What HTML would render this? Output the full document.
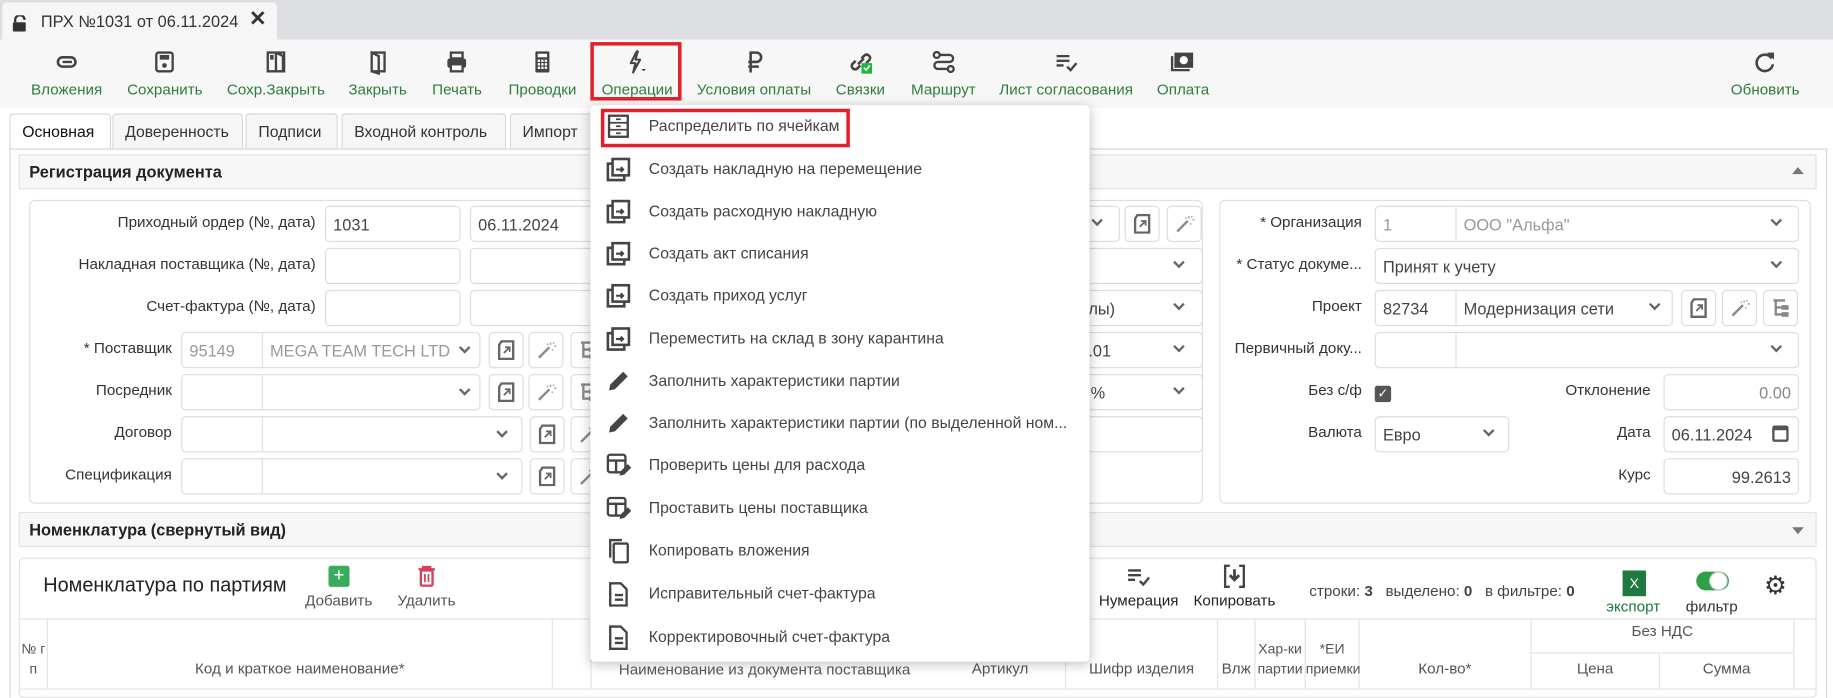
<!DOCTYPE html>
<html><head><meta charset="utf-8">
<style>
*{box-sizing:border-box;margin:0;padding:0}
body{width:1833px;height:689px;overflow:hidden;background:#fff;font-family:"Liberation Sans",sans-serif;font-size:13px;color:#333;position:relative}
#s{position:absolute;left:0;top:0;width:1568px;height:590px;transform:scale(1.16901);transform-origin:0 0}
.a{position:absolute}
.tb{position:absolute;top:42px;text-align:center;transform:translateX(-50%);white-space:nowrap}
.tb svg{display:block;margin:0 auto 5px;width:22px;height:22px}
.tb span{color:#2e7d3e;font-size:13px}
.tab{position:absolute;top:97px;height:30px;border:1px solid #d6d6d6;border-bottom:none;border-radius:3px 3px 0 0;background:#f6f6f6;padding:7px 10px 0;font-size:13.5px;color:#333}
.inp{position:absolute;height:31px;border:1px solid #dcdcdc;border-radius:4px;background:#fff;font-size:14px;padding:7px 6px;color:#444;white-space:nowrap;overflow:hidden}
.lbl{position:absolute;font-size:13px;text-align:right;white-space:nowrap;color:#333}
.chev{position:absolute;width:7px;height:7px;border-right:2px solid #666;border-bottom:2px solid #666;transform:rotate(45deg)}
.btn{position:absolute;width:30px;height:31px;border:1px solid #dcdcdc;border-radius:4px;background:#fff}
.btn svg{position:absolute;left:6px;top:6px;width:17px;height:17px}
.sec{position:absolute;left:16px;width:1538px;height:30px;background:#f7f7f7;border:1px solid #e2e2e2;font-weight:bold;font-size:14px;padding:6px 8px;color:#222}
.mi{position:absolute;left:518px;font-size:13.5px;color:#444;white-space:nowrap}
.mi .t{position:absolute;left:37px;top:0}
.mi svg{position:absolute;left:0;top:-3px;width:22px;height:22px}
.th{position:absolute;font-size:13px;color:#555;text-align:center;border-right:1px solid #e3e3e3}
</style></head><body>
<svg width="0" height="0" style="position:absolute"><defs>
<g id="lk"><path d="M4 1h10v15H2V4z" fill="none" stroke="#666" stroke-width="2"/><path d="M6 11l5-5M7 6h4v4" stroke="#666" stroke-width="1.5" fill="none"/></g>
<g id="wd"><path d="M2 15l9-9" stroke="#888" stroke-width="2"/><path d="M12 2v2M15 5h2M14 3l1-1M13 8l1 1M10 4l-1-1" stroke="#aaa" stroke-width="1.3"/></g>
<g id="tr"><path d="M2 2h10M4 2v13M4 8h8M4 14h8" stroke="#888" stroke-width="2" fill="none"/><rect x="9" y="6" width="6" height="4" fill="#888"/><rect x="9" y="12" width="6" height="4" fill="#888"/></g>
</defs></svg>
<div id="s">
<!-- tab bar -->
<div class="a" style="left:0;top:0;width:1568px;height:34px;background:#dcdee2"></div>
<div class="a" style="left:2px;top:2px;width:235px;height:40px;background:#f6f6f7;border-radius:4px 4px 0 0"></div>
<svg class="a" style="left:10px;top:13px" width="14" height="14" viewBox="0 0 14 14"><path d="M3 6V4a4 4 0 0 1 8 0" fill="none" stroke="#333" stroke-width="2"/><rect x="1" y="6" width="11" height="8" rx="1" fill="#333"/></svg>
<div class="a" style="left:35px;top:10px;font-size:14px;color:#333">ПРХ №1031 от 06.11.2024</div>
<div class="a" style="left:213px;top:6px;font-size:18px;font-weight:bold;color:#333">✕</div>
<!-- toolbar -->
<div class="a" style="left:0;top:34px;width:1568px;height:58px;background:#f7f7f8"></div>
<div class="tb" style="left:57px"><svg viewBox="0 0 22 22"><rect x="4" y="7" width="15" height="8" rx="4" fill="none" stroke="#444" stroke-width="2.2"/><path d="M8 11h8" stroke="#444" stroke-width="2"/></svg><span>Вложения</span></div>
<div class="tb" style="left:141px"><svg viewBox="0 0 22 22"><rect x="4" y="3" width="14" height="16" rx="2" fill="none" stroke="#444" stroke-width="2"/><rect x="7" y="5" width="8" height="4" fill="#444"/><circle cx="11" cy="14" r="2" fill="#444"/></svg><span>Сохранить</span></div>
<div class="tb" style="left:236px"><svg viewBox="0 0 22 22"><path d="M4 3h14v16H4z M11 3v16 M11 3l6 3v13" fill="none" stroke="#444" stroke-width="2"/><rect x="6" y="5" width="3" height="4" fill="#444"/></svg><span>Сохр.Закрыть</span></div>
<div class="tb" style="left:323px"><svg viewBox="0 0 22 22"><path d="M6 3h11v16H6z M6 3l6 3v15l-6-2z" fill="none" stroke="#444" stroke-width="2"/></svg><span>Закрыть</span></div>
<div class="tb" style="left:391px"><svg viewBox="0 0 22 22"><rect x="6" y="3" width="10" height="5" fill="none" stroke="#444" stroke-width="2"/><rect x="3" y="8" width="16" height="8" rx="2" fill="#444"/><rect x="6" y="13" width="10" height="6" fill="#fff" stroke="#444" stroke-width="2"/></svg><span>Печать</span></div>
<div class="tb" style="left:464px"><svg viewBox="0 0 22 22"><rect x="5" y="2" width="12" height="18" rx="1" fill="#444"/><rect x="7" y="4" width="8" height="3" fill="#fff"/><g fill="#fff"><rect x="7" y="9" width="2" height="2"/><rect x="10" y="9" width="2" height="2"/><rect x="13" y="9" width="2" height="2"/><rect x="7" y="12" width="2" height="2"/><rect x="10" y="12" width="2" height="2"/><rect x="13" y="12" width="2" height="2"/><rect x="7" y="15" width="2" height="2"/><rect x="10" y="15" width="2" height="2"/><rect x="13" y="15" width="2" height="2"/></g></svg><span>Проводки</span></div>
<div class="tb" style="left:545px"><svg viewBox="0 0 22 22"><path d="M11 2L6 12h4l-2 8 6-11h-4l2-7z" fill="none" stroke="#444" stroke-width="1.8" stroke-linejoin="round"/><path d="M15 17h4l-2 2z" fill="#444"/></svg><span>Операции</span></div>
<div class="a" style="left:505px;top:36px;width:78px;height:50px;border:3px solid #e3202a"></div>
<div class="tb" style="left:645px"><svg viewBox="0 0 22 22"><path d="M8 20V3h5a4 4 0 0 1 0 8H6 M6 15h9" fill="none" stroke="#444" stroke-width="2.2"/></svg><span>Условия оплаты</span></div>
<div class="tb" style="left:736px"><svg viewBox="0 0 22 22"><path d="M9 13l5-5 M7 10l-3 3a3 3 0 0 0 4 4l3-3 M12 8l3-3a3 3 0 0 1 4 4l-3 3" fill="none" stroke="#444" stroke-width="2.2"/><rect x="12" y="12" width="9" height="9" fill="#1fb53a"/><path d="M14 16l2 2 3-4" stroke="#fff" stroke-width="1.4" fill="none"/></svg><span>Связки</span></div>
<div class="tb" style="left:807px"><svg viewBox="0 0 22 22"><circle cx="5" cy="5" r="2.5" fill="none" stroke="#444" stroke-width="2"/><circle cx="17" cy="17" r="2.5" fill="none" stroke="#444" stroke-width="2"/><path d="M8 5h8a3 3 0 0 1 0 6H6a3 3 0 0 0 0 6h8" fill="none" stroke="#444" stroke-width="2"/></svg><span>Маршрут</span></div>
<div class="tb" style="left:912px"><svg viewBox="0 0 22 22"><path d="M3 6h11M3 10h11M3 14h6M12 15l3 3 5-6" fill="none" stroke="#444" stroke-width="2"/></svg><span>Лист согласования</span></div>
<div class="tb" style="left:1012px"><svg viewBox="0 0 22 22"><rect x="4" y="3" width="16" height="13" fill="#444"/><circle cx="12" cy="9.5" r="3.5" fill="#fff"/><path d="M2 6v12h15" fill="none" stroke="#444" stroke-width="2"/></svg><span>Оплата</span></div>
<div class="tb" style="left:1510px"><svg viewBox="0 0 22 22"><path d="M17 8a7 7 0 1 0 1 5" fill="none" stroke="#444" stroke-width="2.2"/><path d="M13 3h6v6z" fill="#444"/></svg><span>Обновить</span></div>
<!-- tabs -->
<div class="tab" style="left:8px;width:87px;background:#fff;height:31px;color:#111">Основная</div>
<div class="tab" style="left:96px;width:112px">Доверенность</div>
<div class="tab" style="left:210px;width:79px">Подписи</div>
<div class="tab" style="left:292px;width:141px">Входной контроль</div>
<div class="tab" style="left:436px;width:80px">Импорт</div>
<div class="a" style="left:8px;top:127px;width:1555px;height:470px;border:1px solid #d6d6d6;border-bottom:none"></div>
<div class="sec" style="top:132px">Регистрация документа</div>
<div class="a" style="left:1533px;top:143px;border:5px solid transparent;border-bottom:6px solid #777;border-top:none"></div>
<!-- left form -->
<div class="a" style="left:25px;top:171px;width:1004px;height:260px;border:1px solid #e0e0e0;border-radius:5px"></div>
<div class="lbl" style="right:1298px;top:182px">Приходный ордер (№, дата)</div>
<div class="lbl" style="right:1298px;top:218px">Накладная поставщика (№, дата)</div>
<div class="lbl" style="right:1298px;top:254px">Счет-фактура (№, дата)</div>
<div class="inp" style="left:278px;top:176px;width:116px">1031</div>
<div class="inp" style="left:278px;top:212px;width:116px"></div>
<div class="inp" style="left:278px;top:248px;width:116px"></div>
<div class="inp" style="left:402px;top:176px;width:115px">06.11.2024</div>
<div class="inp" style="left:402px;top:212px;width:115px"></div>
<div class="inp" style="left:402px;top:248px;width:115px"></div>
<div class="lbl" style="right:1421px;top:290px">* Поставщик</div>
<div class="lbl" style="right:1421px;top:326px">Посредник</div>
<div class="lbl" style="right:1421px;top:362px">Договор</div>
<div class="lbl" style="right:1421px;top:398px">Спецификация</div>
<div class="inp" style="left:155px;top:284px;width:256px;color:#999">95149<span style="position:absolute;left:68px;top:0;bottom:0;border-left:1px solid #e0e0e0;padding:7px 6px">MEGA TEAM TECH LTD</span></div>
<div class="inp" style="left:155px;top:320px;width:256px"><span style="position:absolute;left:68px;top:0;bottom:0;border-left:1px solid #e0e0e0"></span></div>
<div class="inp" style="left:155px;top:356px;width:292px"><span style="position:absolute;left:68px;top:0;bottom:0;border-left:1px solid #e0e0e0"></span></div>
<div class="inp" style="left:155px;top:392px;width:292px"><span style="position:absolute;left:68px;top:0;bottom:0;border-left:1px solid #e0e0e0"></span></div>
<div class="chev" style="left:394px;top:294px"></div><div class="chev" style="left:394px;top:330px"></div>
<div class="chev" style="left:426px;top:366px"></div><div class="chev" style="left:426px;top:402px"></div>
<div class="btn" style="left:418px;top:284px"><svg viewBox="0 0 17 17"><use href="#lk"/></svg></div><div class="btn" style="left:452px;top:284px"><svg viewBox="0 0 17 17"><use href="#wd"/></svg></div><div class="btn" style="left:488px;top:284px"><svg viewBox="0 0 17 17"><use href="#tr"/></svg></div>
<div class="btn" style="left:418px;top:320px"><svg viewBox="0 0 17 17"><use href="#lk"/></svg></div><div class="btn" style="left:452px;top:320px"><svg viewBox="0 0 17 17"><use href="#wd"/></svg></div><div class="btn" style="left:488px;top:320px"><svg viewBox="0 0 17 17"><use href="#tr"/></svg></div>
<div class="btn" style="left:453px;top:356px"><svg viewBox="0 0 17 17"><use href="#lk"/></svg></div><div class="btn" style="left:488px;top:356px"><svg viewBox="0 0 17 17"><use href="#wd"/></svg></div>
<div class="btn" style="left:453px;top:392px"><svg viewBox="0 0 17 17"><use href="#lk"/></svg></div><div class="btn" style="left:488px;top:392px"><svg viewBox="0 0 17 17"><use href="#wd"/></svg></div>
<!-- visible middle parts -->
<div class="inp" style="left:900px;top:212px;width:129px"></div>
<div class="inp" style="left:900px;top:248px;width:129px"><span class="a" style="left:30px;top:7px">лы)</span></div>
<div class="inp" style="left:900px;top:284px;width:129px"><span class="a" style="left:30px;top:7px">.01</span></div>
<div class="inp" style="left:900px;top:320px;width:129px"><span class="a" style="left:32px;top:7px">%</span></div>
<div class="inp" style="left:900px;top:356px;width:129px"></div>
<div class="inp" style="left:900px;top:176px;width:58px"></div>
<div class="chev" style="left:935px;top:185px"></div>
<div class="chev" style="left:1005px;top:221px"></div><div class="chev" style="left:1005px;top:257px"></div><div class="chev" style="left:1005px;top:293px"></div><div class="chev" style="left:1005px;top:329px"></div>
<div class="btn" style="left:962px;top:176px"><svg viewBox="0 0 17 17"><use href="#lk"/></svg></div><div class="btn" style="left:998px;top:176px"><svg viewBox="0 0 17 17"><use href="#wd"/></svg></div>
<!-- right form -->
<div class="a" style="left:1043px;top:171px;width:506px;height:260px;border:1px solid #e0e0e0;border-radius:5px"></div>
<div class="lbl" style="right:403px;top:182px">* Организация</div>
<div class="lbl" style="right:403px;top:218px">* Статус докуме...</div>
<div class="lbl" style="right:403px;top:254px">Проект</div>
<div class="lbl" style="right:403px;top:290px">Первичный доку...</div>
<div class="lbl" style="right:403px;top:326px">Без с/ф</div>
<div class="lbl" style="right:403px;top:362px">Валюта</div>
<div class="inp" style="left:1176px;top:176px;width:363px;color:#999">1<span style="position:absolute;left:68px;top:0;bottom:0;border-left:1px solid #e0e0e0;padding:7px 6px">ООО "Альфа"</span></div>
<div class="inp" style="left:1176px;top:212px;width:363px">Принят к учету</div>
<div class="inp" style="left:1176px;top:248px;width:255px">82734<span style="position:absolute;left:68px;top:0;bottom:0;border-left:1px solid #e0e0e0;padding:7px 6px">Модернизация сети</span></div>
<div class="inp" style="left:1176px;top:284px;width:363px"><span style="position:absolute;left:68px;top:0;bottom:0;border-left:1px solid #e0e0e0"></span></div>
<div class="chev" style="left:1516px;top:185px"></div><div class="chev" style="left:1516px;top:221px"></div><div class="chev" style="left:1412px;top:257px"></div><div class="chev" style="left:1516px;top:293px"></div>
<div class="btn" style="left:1438px;top:248px"><svg viewBox="0 0 17 17"><use href="#lk"/></svg></div><div class="btn" style="left:1473px;top:248px"><svg viewBox="0 0 17 17"><use href="#wd"/></svg></div><div class="btn" style="left:1508px;top:248px"><svg viewBox="0 0 17 17"><use href="#tr"/></svg></div>
<div class="a" style="left:1176px;top:330px;width:14px;height:14px;background:#555;border-radius:2px;color:#fff;font-size:11px;line-height:14px;text-align:center">✓</div>
<div class="lbl" style="right:156px;top:326px">Отклонение</div>
<div class="inp" style="left:1423px;top:320px;width:116px;text-align:right;color:#888">0.00</div>
<div class="inp" style="left:1176px;top:356px;width:115px">Евро</div>
<div class="chev" style="left:1270px;top:365px"></div>
<div class="lbl" style="right:156px;top:362px">Дата</div>
<div class="inp" style="left:1423px;top:356px;width:116px">06.11.2024</div>
<div class="a" style="left:1516px;top:364px;width:14px;height:14px;border:2px solid #555;border-top-width:4px;border-radius:2px"></div>
<div class="lbl" style="right:156px;top:398px">Курс</div>
<div class="inp" style="left:1423px;top:392px;width:116px;text-align:right">99.2613</div>
<!-- nomenclature -->
<div class="sec" style="top:438px">Номенклатура (свернутый вид)</div>
<div class="a" style="left:1533px;top:451px;border:5px solid transparent;border-top:6px solid #777;border-bottom:none"></div>
<div class="a" style="left:16px;top:477px;width:1538px;height:120px;border:1px solid #e0e0e0;border-radius:4px"></div>
<div class="a" style="left:37px;top:491px;font-size:17px;color:#222">Номенклатура по партиям</div>
<div class="a" style="left:281px;top:484px;width:18px;height:18px;background:#3aaa5c;border-radius:2px;color:#fff;text-align:center;line-height:18px;font-size:16px">+</div>
<div class="a" style="left:261px;top:506px;font-size:13px;color:#555">Добавить</div>
<svg class="a" style="left:357px;top:484px" width="16" height="18" viewBox="0 0 16 18"><path d="M1 3h14M5 3V1h6v2" stroke="#d6405a" stroke-width="2" fill="none"/><rect x="3" y="4" width="10" height="13" rx="1" fill="none" stroke="#d6405a" stroke-width="2"/><path d="M6.5 7v7M9.5 7v7" stroke="#d6405a" stroke-width="1.5"/></svg>
<div class="a" style="left:340px;top:506px;font-size:13px;color:#555">Удалить</div>
<svg class="a" style="left:963px;top:484px" width="22" height="20" viewBox="0 0 22 20"><path d="M2 4h11M2 8h11M2 12h6M12 13l3 3 5-6" fill="none" stroke="#444" stroke-width="2"/></svg>
<div class="a" style="left:940px;top:506px;font-size:13px;color:#222">Нумерация</div>
<svg class="a" style="left:1046px;top:482px" width="20" height="22" viewBox="0 0 20 22"><path d="M6 2H2v18h4M14 2h4v18h-4" fill="none" stroke="#444" stroke-width="2"/><path d="M10 5v8M6 10l4 4 4-4" stroke="#444" stroke-width="2.4" fill="none"/></svg>
<div class="a" style="left:1021px;top:506px;font-size:13px;color:#222">Копировать</div>
<div class="a" style="left:1120px;top:498px;font-size:13px;color:#444">строки: <b>3</b>&nbsp;&nbsp; выделено: <b>0</b>&nbsp;&nbsp; в фильтре: <b>0</b></div>
<div class="a" style="left:1388px;top:488px;width:20px;height:22px;background:#1e7a3e;color:#fff;font-size:12px;text-align:center;line-height:22px">X</div>
<div class="a" style="left:1374px;top:511px;font-size:13px;color:#1e7a3e">экспорт</div>
<div class="a" style="left:1451px;top:489px;width:28px;height:16px;background:#2ca14a;border-radius:8px"></div>
<div class="a" style="left:1462px;top:489px;width:16px;height:16px;background:#fff;border:1px solid #ccc;border-radius:50%"></div>
<div class="a" style="left:1442px;top:511px;font-size:13px;color:#333">фильтр</div>
<div class="a" style="left:1509px;top:490px;font-size:22px;color:#333;line-height:22px">⚙</div>
<div class="a" style="left:17px;top:529px;width:1536px;border-top:1px solid #e3e3e3"></div>
<div class="th" style="left:17px;top:530px;width:24px;height:59px;padding-top:17px;line-height:17px;font-size:12px">№ г<br>п</div>
<div class="th" style="left:41px;top:530px;width:432px;height:59px;padding-top:34px">Код и краткое наименование*</div>
<div class="th" style="left:473px;top:530px;width:33px;height:59px"></div>
<div class="th" style="left:800px;top:530px;width:112px;height:59px;padding-top:34px">Артикул</div>
<div class="th" style="left:912px;top:530px;width:130px;height:59px;padding-top:34px">Шифр изделия</div>
<div class="th" style="left:1042px;top:530px;width:32px;height:59px;padding-top:34px">Влж</div>
<div class="th" style="left:1074px;top:530px;width:43px;height:59px;padding-top:17px;line-height:17px;font-size:12px">Хар-ки<br>партии</div>
<div class="th" style="left:1117px;top:530px;width:46px;height:59px;padding-top:17px;line-height:17px;font-size:12px">*ЕИ<br>приемки</div>
<div class="th" style="left:1163px;top:530px;width:147px;height:59px;padding-top:34px">Кол-во*</div>
<div class="th" style="left:1310px;top:530px;width:225px;height:29px;padding-top:2px;border-bottom:1px solid #e3e3e3">Без НДС</div>
<div class="th" style="left:1310px;top:559px;width:110px;height:30px;padding-top:5px">Цена</div>
<div class="th" style="left:1420px;top:559px;width:115px;height:30px;padding-top:5px">Сумма</div>
<div class="a" style="left:17px;top:589px;width:1536px;border-top:1px solid #e3e3e3"></div>
<!-- dropdown -->
<div class="a" style="left:505px;top:90px;width:427px;height:476px;background:#fff;border-radius:4px;box-shadow:0 2px 10px rgba(0,0,0,.25)"></div>
<div class="a" style="left:508px;top:565px;width:292px;font-size:13px;color:#555;text-align:center">Наименование из документа поставщика</div>
<div class="a" style="left:514px;top:93px;width:213px;height:33px;border:3px solid #e3202a"></div>
<div class="mi" style="top:100px"><svg viewBox="0 0 22 22"><rect x="3" y="2" width="16" height="18" fill="none" stroke="#444" stroke-width="2"/><path d="M3 8h16M3 14h16M9 5h4M9 11h4M9 17h4" stroke="#444" stroke-width="1.5"/></svg><span class="t">Распределить по ячейкам</span></div>
<div class="mi" style="top:137px"><svg viewBox="0 0 22 22"><path d="M6 6H2v14h14v-4" fill="none" stroke="#444" stroke-width="2.2"/><rect x="6" y="2" width="14" height="14" fill="none" stroke="#444" stroke-width="2.2"/><path d="M9 11h6M13 9l2 2-2 2" stroke="#444" stroke-width="1.8" fill="none"/></svg><span class="t">Создать накладную на перемещение</span></div>
<div class="mi" style="top:173px"><svg viewBox="0 0 22 22"><path d="M6 6H2v14h14v-4" fill="none" stroke="#444" stroke-width="2.2"/><rect x="6" y="2" width="14" height="14" fill="none" stroke="#444" stroke-width="2.2"/><path d="M9 11h6M13 9l2 2-2 2" stroke="#444" stroke-width="1.8" fill="none"/></svg><span class="t">Создать расходную накладную</span></div>
<div class="mi" style="top:209px"><svg viewBox="0 0 22 22"><path d="M6 6H2v14h14v-4" fill="none" stroke="#444" stroke-width="2.2"/><rect x="6" y="2" width="14" height="14" fill="none" stroke="#444" stroke-width="2.2"/><path d="M9 11h6M13 9l2 2-2 2" stroke="#444" stroke-width="1.8" fill="none"/></svg><span class="t">Создать акт списания</span></div>
<div class="mi" style="top:245px"><svg viewBox="0 0 22 22"><path d="M6 6H2v14h14v-4" fill="none" stroke="#444" stroke-width="2.2"/><rect x="6" y="2" width="14" height="14" fill="none" stroke="#444" stroke-width="2.2"/><path d="M9 11h6M13 9l2 2-2 2" stroke="#444" stroke-width="1.8" fill="none"/></svg><span class="t">Создать приход услуг</span></div>
<div class="mi" style="top:282px"><svg viewBox="0 0 22 22"><path d="M6 6H2v14h14v-4" fill="none" stroke="#444" stroke-width="2.2"/><rect x="6" y="2" width="14" height="14" fill="none" stroke="#444" stroke-width="2.2"/><path d="M9 11h6M13 9l2 2-2 2" stroke="#444" stroke-width="1.8" fill="none"/></svg><span class="t">Переместить на склад в зону карантина</span></div>
<div class="mi" style="top:318px"><svg viewBox="0 0 22 22"><path d="M3 19l1-5L15 3l4 4L8 18z" fill="#444"/></svg><span class="t">Заполнить характеристики партии</span></div>
<div class="mi" style="top:354px"><svg viewBox="0 0 22 22"><path d="M3 19l1-5L15 3l4 4L8 18z" fill="#444"/></svg><span class="t">Заполнить характеристики партии (по выделенной ном...</span></div>
<div class="mi" style="top:390px"><svg viewBox="0 0 22 22"><rect x="2" y="2" width="15" height="15" rx="2" fill="none" stroke="#444" stroke-width="2"/><path d="M2 7h15M9 7v10" stroke="#444" stroke-width="2"/><path d="M12 20l1-4 6-6 3 3-6 6z" fill="#444"/></svg><span class="t">Проверить цены для расхода</span></div>
<div class="mi" style="top:427px"><svg viewBox="0 0 22 22"><rect x="2" y="2" width="15" height="15" rx="2" fill="none" stroke="#444" stroke-width="2"/><path d="M2 7h15M9 7v10" stroke="#444" stroke-width="2"/><path d="M12 20l1-4 6-6 3 3-6 6z" fill="#444"/></svg><span class="t">Проставить цены поставщика</span></div>
<div class="mi" style="top:463px"><svg viewBox="0 0 22 22"><path d="M4 17V2h10" fill="none" stroke="#444" stroke-width="2"/><rect x="7" y="5" width="12" height="16" rx="1" fill="none" stroke="#444" stroke-width="2"/></svg><span class="t">Копировать вложения</span></div>
<div class="mi" style="top:500px"><svg viewBox="0 0 22 22"><path d="M4 2h9l5 5v14H4z" fill="none" stroke="#444" stroke-width="2"/><path d="M8 12h7M8 16h7" stroke="#444" stroke-width="2"/></svg><span class="t">Исправительный счет-фактура</span></div>
<div class="mi" style="top:537px"><svg viewBox="0 0 22 22"><path d="M4 2h9l5 5v14H4z" fill="none" stroke="#444" stroke-width="2"/><path d="M8 12h7M8 16h7" stroke="#444" stroke-width="2"/></svg><span class="t">Корректировочный счет-фактура</span></div>
</div>
</body></html>
